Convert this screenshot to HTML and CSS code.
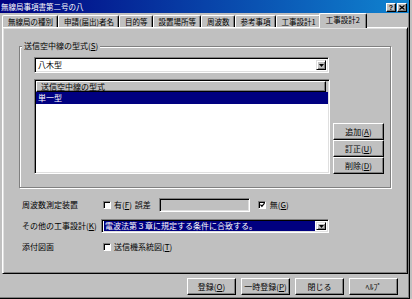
FILE: index.html
```html
<!DOCTYPE html>
<html lang="ja">
<head>
<meta charset="utf-8">
<title>無線局事項書第二号の八</title>
<link rel="stylesheet" href="styles.css">
</head>
<body>
<div class="window">
  <div class="titlebar">
    <span class="title">無線局事項書第二号の八</span>
    <div class="caption-btns">
      <span class="cbtn help">?</span>
      <span class="cbtn close"><svg width="6" height="5" viewBox="0 0 6 5"><path d="M0.5 0.5 L5.5 4.5 M5.5 0.5 L0.5 4.5" stroke="#000" stroke-width="1.3" fill="none"/></svg></span>
    </div>
  </div>

  <div class="tabs">
    <div class="tab">無線局の種別</div>
    <div class="tab">申請(届出)者名</div>
    <div class="tab">目的等</div>
    <div class="tab">設置場所等</div>
    <div class="tab">周波数</div>
    <div class="tab">参考事項</div>
    <div class="tab">工事設計1</div>
    <div class="tab active">工事設計2</div>
  </div>

  <div class="panel">
    <div class="group">
      <span class="group-label">送信空中線の型式(<u>S</u>)</span>
      <div class="group-body">
        <div class="group-main">
          <div class="combo combo-antenna">
            <span class="combo-text">八木型</span>
            <span class="drop"><svg width="5" height="3" viewBox="0 0 5 3"><path d="M0 0 H5 L2.5 3 Z" fill="#000"/></svg></span>
          </div>
          <div class="list">
            <div class="list-head"><span class="col">送信空中線の型式</span></div>
            <div class="list-row selected">単一型</div>
          </div>
        </div>
        <div class="side-btns">
          <button class="btn">追加(<u>A</u>)</button>
          <button class="btn">訂正(<u>U</u>)</button>
          <button class="btn">削除(<u>D</u>)</button>
        </div>
      </div>
    </div>

    <div class="form">
      <div class="frow">
        <span class="flabel">周波数測定装置</span>
        <span class="check"></span>
        <span class="ctext">有(<u>F</u>)</span>
        <span class="ctext gosa">誤差</span>
        <span class="textbox disabled"></span>
        <span class="check checked"><svg width="6" height="6" viewBox="0 0 6 6"><path d="M0.5 2.5 L2.3 4.5 L5.5 0.8" stroke="#000" stroke-width="1.4" fill="none"/></svg></span>
        <span class="ctext">無(<u>G</u>)</span>
      </div>
      <div class="frow">
        <span class="flabel">その他の工事設計(<u>K</u>)</span>
        <div class="combo combo-other">
          <span class="combo-text"><span class="sel-text">電波法第３章に規定する条件に合致する。</span></span>
          <span class="drop"><svg width="5" height="3" viewBox="0 0 5 3"><path d="M0 0 H5 L2.5 3 Z" fill="#000"/></svg></span>
        </div>
      </div>
      <div class="frow">
        <span class="flabel">添付図面</span>
        <span class="check"></span>
        <span class="ctext">送信機系統図(<u>T</u>)</span>
      </div>
    </div>
  </div>

  <div class="footer">
    <button class="btn fbtn">登録(<u>O</u>)</button>
    <button class="btn fbtn">一時登録(<u>P</u>)</button>
    <button class="btn fbtn">閉じる</button>
    <button class="btn fbtn">ﾍﾙﾌﾟ</button>
  </div>
</div>
</body>
</html>
```

FILE: styles.css
```css
* { box-sizing: border-box; }
html, body { margin: 0; padding: 0; }
body {
  width: 412px;
  height: 299px;
  overflow: hidden;
  background: #c0c0c0;
  font-family: "Noto Sans CJK JP", "Noto Sans", sans-serif;
  font-size: 8px;
  line-height: 10px;
  color: #000;
}
u { text-decoration: underline; text-underline-offset: 1px; }

.window {
  width: 410px;
  height: 299px;
  background: #c0c0c0;
  border-right: 1px solid #000;
  border-bottom: 1px solid #000;
  box-shadow: inset -1px -1px 0 #808080;
  display: flex;
  flex-direction: column;
}

/* title bar */
.titlebar {
  height: 13px;
  flex: none;
  background: linear-gradient(to right, #000080, #1084d0);
  display: flex;
  align-items: center;
  justify-content: space-between;
  padding-left: 1px;
  padding-right: 2px;
}
.title {
  color: #fff;
  font-size: 7.5px;
  line-height: 13px;
}
.caption-btns {
  display: flex;
  gap: 1px;
  align-self: flex-end;
  padding-bottom: 1px;
}
.cbtn {
  width: 10px;
  height: 9px;
  background: #c0c0c0;
  border-top: 1px solid #fff;
  border-left: 1px solid #fff;
  border-right: 1px solid #000;
  border-bottom: 1px solid #000;
  box-shadow: inset -1px -1px 0 #808080;
  display: flex;
  align-items: center;
  justify-content: center;
  font-family: "Liberation Sans", sans-serif;
  font-weight: bold;
  font-size: 7px;
  line-height: 7px;
}

/* tabs */
.tabs {
  height: 14px;
  flex: none;
  display: flex;
  align-items: flex-end;
  padding-left: 2px;
  position: relative;
  z-index: 1;
}
.tab {
  height: 12px;
  padding: 0 4px 0 5px;
  font-size: 7.5px;
  line-height: 11px;
  white-space: nowrap;
  background: #c0c0c0;
  border-top: 1px solid #fff;
  border-left: 1px solid #fff;
  border-right: 1px solid #000;
  border-radius: 2px 2px 0 0;
  box-shadow: inset -1px 0 0 #808080;
}
.tab.active {
  height: 15px;
  margin: 0 -2px -1px -2px;
  padding: 0 6px 0 6px;
  line-height: 12px;
  position: relative;
  z-index: 2;
}

/* panel */
.panel {
  flex: none;
  height: 247px;
  width: 406px;
  margin-left: 2px;
  border-top: 1px solid #fff;
  border-left: 1px solid #fff;
  border-right: 1px solid #000;
  border-bottom: 1px solid #000;
  box-shadow: inset 1px 1px 0 #dfdfdf, inset -1px -1px 0 #808080;
  padding: 1px;
}

/* group box */
.group {
  margin: 17px 0 0 15px;
  width: 372px;
  border: 1px solid #808080;
  box-shadow: inset 1px 1px 0 #fff, 1px 1px 0 #fff;
  padding: 0 5px 13px 14px;
  display: flex;
  flex-direction: column;
}
.group-label {
  align-self: flex-start;
  margin: -6px 0 0 -12px;
  padding: 0 2px;
  background: #c0c0c0;
  line-height: 10px;
}
.group-body {
  margin-top: 6px;
  display: flex;
  align-items: flex-end;
  gap: 3px;
}
.group-main {
  width: 296px;
  display: flex;
  flex-direction: column;
  gap: 6px;
}

/* combo */
.combo {
  display: flex;
  align-items: center;
  background: #fff;
  border-top: 1px solid #808080;
  border-left: 1px solid #808080;
  border-right: 1px solid #fff;
  border-bottom: 1px solid #fff;
  box-shadow: inset 1px 1px 0 #000, inset -1px -1px 0 #dfdfdf;
  padding: 2px;
}
.combo-antenna { height: 16px; width: 295px; }
.combo-text {
  flex: 1;
  padding-left: 1px;
  white-space: nowrap;
  overflow: hidden;
}
.drop {
  width: 10px;
  height: 100%;
  background: #c0c0c0;
  border-top: 1px solid #dfdfdf;
  border-left: 1px solid #dfdfdf;
  border-right: 1px solid #000;
  border-bottom: 1px solid #000;
  box-shadow: inset 1px 1px 0 #fff, inset -1px -1px 0 #808080;
  display: flex;
  align-items: center;
  justify-content: center;
}

/* list */
.list {
  height: 95px;
  background: #fff;
  border-top: 1px solid #808080;
  border-left: 1px solid #808080;
  border-right: 1px solid #fff;
  border-bottom: 1px solid #fff;
  box-shadow: inset 1px 1px 0 #000, inset -1px -1px 0 #dfdfdf;
  padding: 1px 1px 1px 1px;
  display: flex;
  flex-direction: column;
}
.list-head {
  height: 11px;
  background: #c0c0c0;
  display: flex;
}
.list-head .col {
  flex: 1;
  margin-right: 2px;
  padding-left: 4px;
  line-height: 9px;
  border-top: 1px solid #fff;
  border-left: 1px solid #fff;
  border-right: 1px solid #000;
  border-bottom: 1px solid #000;
  box-shadow: inset -1px -1px 0 #808080;
}
.list-row {
  height: 12px;
  line-height: 12px;
  padding-left: 2px;
}
.list-row.selected {
  background: #000080;
  color: #fff;
}

/* buttons */
.btn {
  font: inherit;
  color: #000;
  margin: 0;
  padding: 0;
  background: #c0c0c0;
  border-top: 1px solid #fff;
  border-left: 1px solid #fff;
  border-right: 1px solid #000;
  border-bottom: 1px solid #000;
  box-shadow: inset -1px -1px 0 #808080;
  display: flex;
  align-items: center;
  justify-content: center;
  white-space: nowrap;
}
.side-btns {
  display: flex;
  flex-direction: column;
  width: 51px;
}
.side-btns .btn { height: 17px; }

/* form rows */
.form {
  margin-top: 10px;
  padding-left: 18px;
  display: flex;
  flex-direction: column;
  gap: 7px;
}
.frow {
  height: 14px;
  display: flex;
  align-items: center;
}
.flabel {
  width: 81px;
  flex: none;
  white-space: nowrap;
}
.check {
  width: 8px;
  height: 8px;
  flex: none;
  background: #fff;
  border-top: 1px solid #808080;
  border-left: 1px solid #808080;
  border-right: 1px solid #fff;
  border-bottom: 1px solid #fff;
  box-shadow: inset 1px 1px 0 #000;
  display: flex;
  align-items: center;
  justify-content: center;
  margin-right: 3px;
}
.ctext { white-space: nowrap; }
.gosa { margin-left: 3px; margin-right: 8px; }
.textbox {
  width: 91px;
  height: 14px;
  border-top: 1px solid #808080;
  border-left: 1px solid #808080;
  border-right: 1px solid #fff;
  border-bottom: 1px solid #fff;
  box-shadow: inset 1px 1px 0 #000, inset -1px -1px 0 #dfdfdf;
  margin-right: 8px;
}
.textbox.disabled { background: #c0c0c0; }
.checked { padding-left: 1px; }
.checked + .ctext { margin-left: 1px; }

.combo-other {
  width: 228px;
  height: 14px;
  margin-left: -2px;
}
.combo-other .combo-text { padding-left: 0; display: flex; margin-right: 1px; }
.sel-text {
  flex: 1;
  background: #000080;
  color: #fff;
  padding-left: 1px;
  line-height: 10px;
}

/* footer */
.footer {
  flex: none;
  display: flex;
  gap: 5px;
  padding: 4px 0 0 187px;
}
.fbtn {
  width: 49px;
  height: 17px;
}
```
